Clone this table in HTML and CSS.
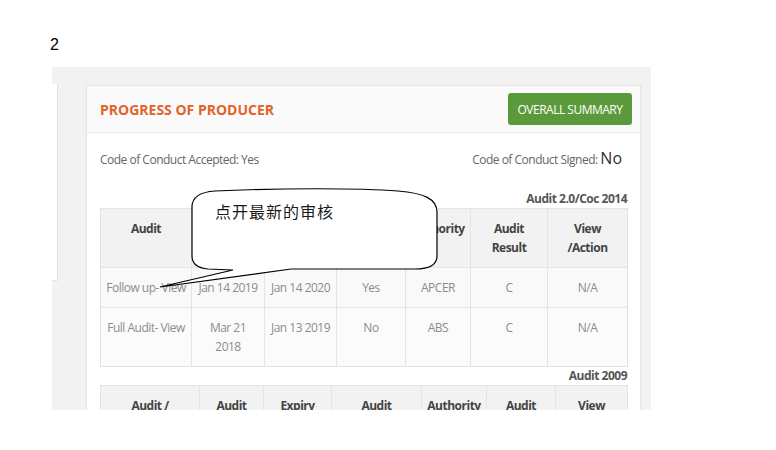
FILE: index.html
```html
<!DOCTYPE html>
<html>
<head>
<meta charset="utf-8">
<link rel="stylesheet" href="styles.css">
</head>
<body>
<div class="doc">
  <div class="pnum">2</div>
  <div class="shot">
    <div class="side"></div>
    <div class="card">
      <div class="card-head">
        <div class="title">PROGRESS OF PRODUCER</div>
        <div class="btn">OVERALL SUMMARY</div>
      </div>
      <div class="card-body">
        <div class="conduct">
          <span>Code of Conduct Accepted: Yes</span>
          <span>Code of Conduct Signed: <span class="big">No</span></span>
        </div>
        <div class="label first">Audit 2.0/Coc 2014</div>
        <table>
          <colgroup>
            <col style="width:91px"><col style="width:73px"><col style="width:72px"><col style="width:69px"><col style="width:65px"><col style="width:77px"><col style="width:80px">
          </colgroup>
          <thead>
            <tr><th>Audit</th><th>Audit<br>Date</th><th>Expiry<br>Date</th><th>Re-Audit</th><th>Authority</th><th>Audit<br>Result</th><th>View<br>/Action</th></tr>
          </thead>
          <tbody>
            <tr><td>Follow up- View</td><td>Jan 14 2019</td><td>Jan 14 2020</td><td>Yes</td><td>APCER</td><td>C</td><td>N/A</td></tr>
            <tr class="even"><td>Full Audit- View</td><td>Mar 21<br>2018</td><td>Jan 13 2019</td><td>No</td><td>ABS</td><td>C</td><td>N/A</td></tr>
          </tbody>
        </table>
        <div class="label">Audit 2009</div>
        <table>
          <colgroup>
            <col style="width:99px"><col style="width:64px"><col style="width:68px"><col style="width:90px"><col style="width:65px"><col style="width:69px"><col style="width:72px">
          </colgroup>
          <thead>
            <tr><th>Audit /<br>Type</th><th>Audit<br>Date</th><th>Expiry<br>Date</th><th>Audit<br>Passed</th><th>Authority</th><th>Audit<br>Result</th><th>View<br>/Action</th></tr>
          </thead>
        </table>
      </div>
    </div>
  </div>
</div>
<svg class="callout" width="776" height="450" viewBox="0 0 776 450">
  <path d="M 215 191 C 280 188, 360 188, 398 191 C 424 193, 437 199, 437 212 L 437 256 C 437 265, 430 269, 415 269 L 291 269 L 160 287 L 233 270 L 208 269 C 197 268, 192 264, 192 256 L 192 207 C 192 197, 200 192, 215 191 Z" fill="#fff" stroke="#000" stroke-width="1.2"/>
  <text x="215" y="218" class="callout-text">点开最新的审核</text>
</svg>
</body>
</html>
```

FILE: styles.css
```css
html, body {
  margin: 0;
  padding: 0;
}
body {
  width: 776px;
  height: 450px;
  overflow: hidden;
  position: relative;
  background: #fff;
  font-family: "Open Sans", "Liberation Sans", sans-serif;
}
.doc {
  padding-top: 36px;
}
.pnum {
  margin-left: 50px;
  font: 16px/18px "Liberation Sans", Arial, sans-serif;
  color: #000;
  height: 18px;
}
.shot {
  margin: 13px 0 0 52px;
  width: 599px;
  height: 343px;
  box-sizing: border-box;
  background: #f2f2f2;
  overflow: hidden;
  display: flex;
  align-items: flex-start;
  padding-top: 17px;
}
.side {
  flex: none;
  width: 5px;
  height: 196px;
  background: #fff;
  border-right: 1px solid #e0e0e0;
  border-bottom: 1px solid #e6e6e6;
  margin-right: 28px;
}
.card {
  flex: none;
  width: 555px;
  height: 400px;
  margin-top: 1px;
  background: #fff;
  border: 1px solid #e6e6e6;
  box-sizing: border-box;
  box-shadow: 0 1px 2px rgba(0,0,0,0.04);
}
.card-head {
  height: 47px;
  box-sizing: border-box;
  border-bottom: 1px solid #e9e9e9;
  background: #fafafa;
  display: flex;
  align-items: center;
  justify-content: space-between;
  padding: 0 8px 0 13px;
}
.title {
  color: #e1632c;
  font-weight: 700;
  font-size: 14px;
}
.btn {
  background: #5a9a3b;
  color: #fff;
  font-size: 12px;
  letter-spacing: -0.5px;
  height: 32px;
  width: 124px;
  border-radius: 3px;
  display: flex;
  align-items: center;
  justify-content: center;
}
.card-body {
  padding: 0 13px;
  letter-spacing: -0.5px;
}
.conduct {
  display: flex;
  justify-content: space-between;
  align-items: baseline;
  padding: 16px 5px 0 0;
  line-height: 18px;
  height: 18px;
  font-size: 12px;
  color: #666;
}
.conduct .big {
  font-size: 16px;
  line-height: 18px;
  color: #333;
  letter-spacing: 0;
}
.label {
  text-align: right;
  font-weight: 700;
  font-size: 12px;
  color: #555;
  line-height: 18px;
}
.label.first {
  margin-top: 23px;
}
table {
  width: 527px;
  table-layout: fixed;
  border-collapse: collapse;
  font-size: 12px;
}
th, td {
  border: 1px solid #e4e4e4;
  padding: 10px 4px;
  line-height: 19px;
  text-align: center;
  vertical-align: top;
}
th {
  background: #f2f2f2;
  color: #444;
  font-weight: 700;
}
td {
  color: #8c8c8c;
  background: #f9f9f9;
}
tr.even td {
  background: #fbfbfb;
}
.callout {
  position: absolute;
  left: 0;
  top: 0;
  pointer-events: none;
}
.callout-text {
  font-family: "Noto Sans CJK SC", sans-serif;
  font-size: 16px;
  letter-spacing: 1px;
  fill: #1a1a1a;
}
```
